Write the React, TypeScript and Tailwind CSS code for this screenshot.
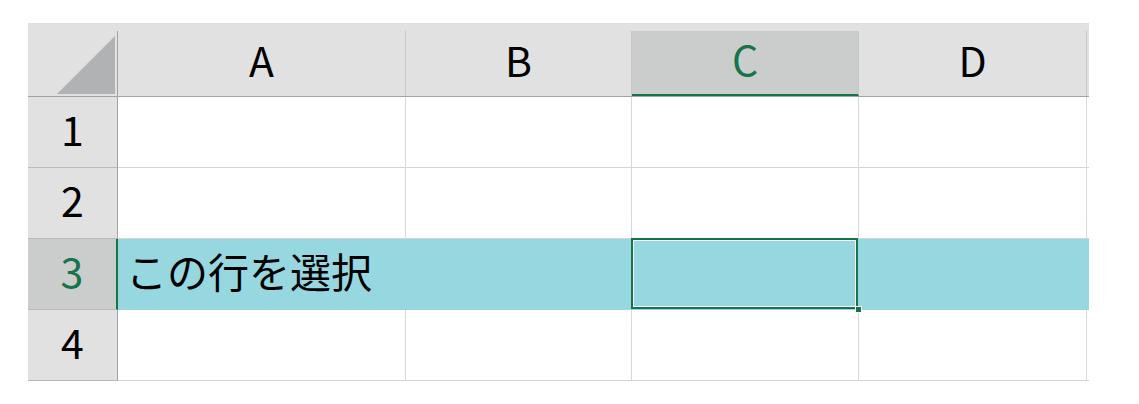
import React from "react";

const font = { fontFamily: '"Noto Sans CJK JP", "Noto Sans", sans-serif' };

const columns = [
  { label: "A", width: "w-[288px]" },
  { label: "B", width: "w-[226px]" },
  { label: "C", width: "w-[227px]", active: true },
  { label: "D", width: "w-[228px]" },
];

const rows = [1, 2, 3, 4];

const App: React.FC = () => {
  return (
    <div className="min-h-[404px] w-[1139px] bg-white pl-[28px] pt-[23px]" style={font}>
      <div className="w-[1061px]">
        {/* column headers */}
        <div className="flex h-[74px] items-end border-b border-[#a3a3a3] bg-[#e1e1e1]">
          <div className="relative flex h-[65px] w-[90px] shrink-0 border-r border-[#a3a3a3]">
            <svg
              className="absolute bottom-[2px] right-[2px]"
              width="58"
              height="58"
              viewBox="0 0 58 58"
            >
              <polygon points="58,0 58,58 0,58" fill="#b1b2b3" />
            </svg>
          </div>
          {columns.map((col) => (
            <div
              key={col.label}
              className={`flex h-[65px] shrink-0 items-center justify-center border-r border-[#c9c9c9] pb-[8px] text-[41px] leading-none ${col.width} ${
                col.active
                  ? "border-b-2 border-b-[#16744a] bg-[#cbcccc] text-[#16744a]"
                  : "text-black"
              }`}
            >
              {col.label}
            </div>
          ))}
          <div className="h-[65px] w-[2px] shrink-0" />
        </div>

        {/* rows */}
        {rows.map((n) => {
          const selected = n === 3;
          return (
            <div key={n} className="flex h-[71px]">
              <div
                className={`flex w-[90px] shrink-0 items-center justify-center border-b pb-[8px] text-[41px] leading-none ${
                  selected
                    ? "border-r-2 border-b-[#b9b9b9] border-r-[#16744a] bg-[#cbcccc] text-[#16744a]"
                    : "border-r border-b-[#b9b9b9] border-r-[#a3a3a3] bg-[#e1e1e1] text-black"
                }`}
              >
                {n}
              </div>
              {columns.map((col) => {
                const isActive = selected && col.active;
                return (
                  <div
                    key={col.label}
                    className={`relative flex shrink-0 items-center border-b border-r ${col.width} ${
                      selected
                        ? "border-[#97d7e0] bg-[#97d7e0]"
                        : "border-b-[#d4d4d4] border-r-[#d9d9d9] bg-white"
                    }`}
                  >
                    {selected && col.label === "A" && (
                      <span className="pb-[8px] pl-[8px] text-[41px] leading-none text-black">
                        この行を選択
                      </span>
                    )}
                    {isActive && (
                      <>
                        <div className="absolute -left-px -top-px bottom-0 right-0 z-10 border-2 border-[#16744a]">
                          <div className="h-full w-full border border-white" />
                        </div>
                        <div className="absolute -bottom-[4px] -right-[4px] z-20 h-[7px] w-[7px] border border-white bg-[#16744a]" />
                      </>
                    )}
                  </div>
                );
              })}
              <div
                className={`w-[2px] shrink-0 ${selected ? "bg-[#97d7e0]" : "border-b border-[#d4d4d4]"}`}
              />
            </div>
          );
        })}
      </div>
    </div>
  );
};

export default App;
